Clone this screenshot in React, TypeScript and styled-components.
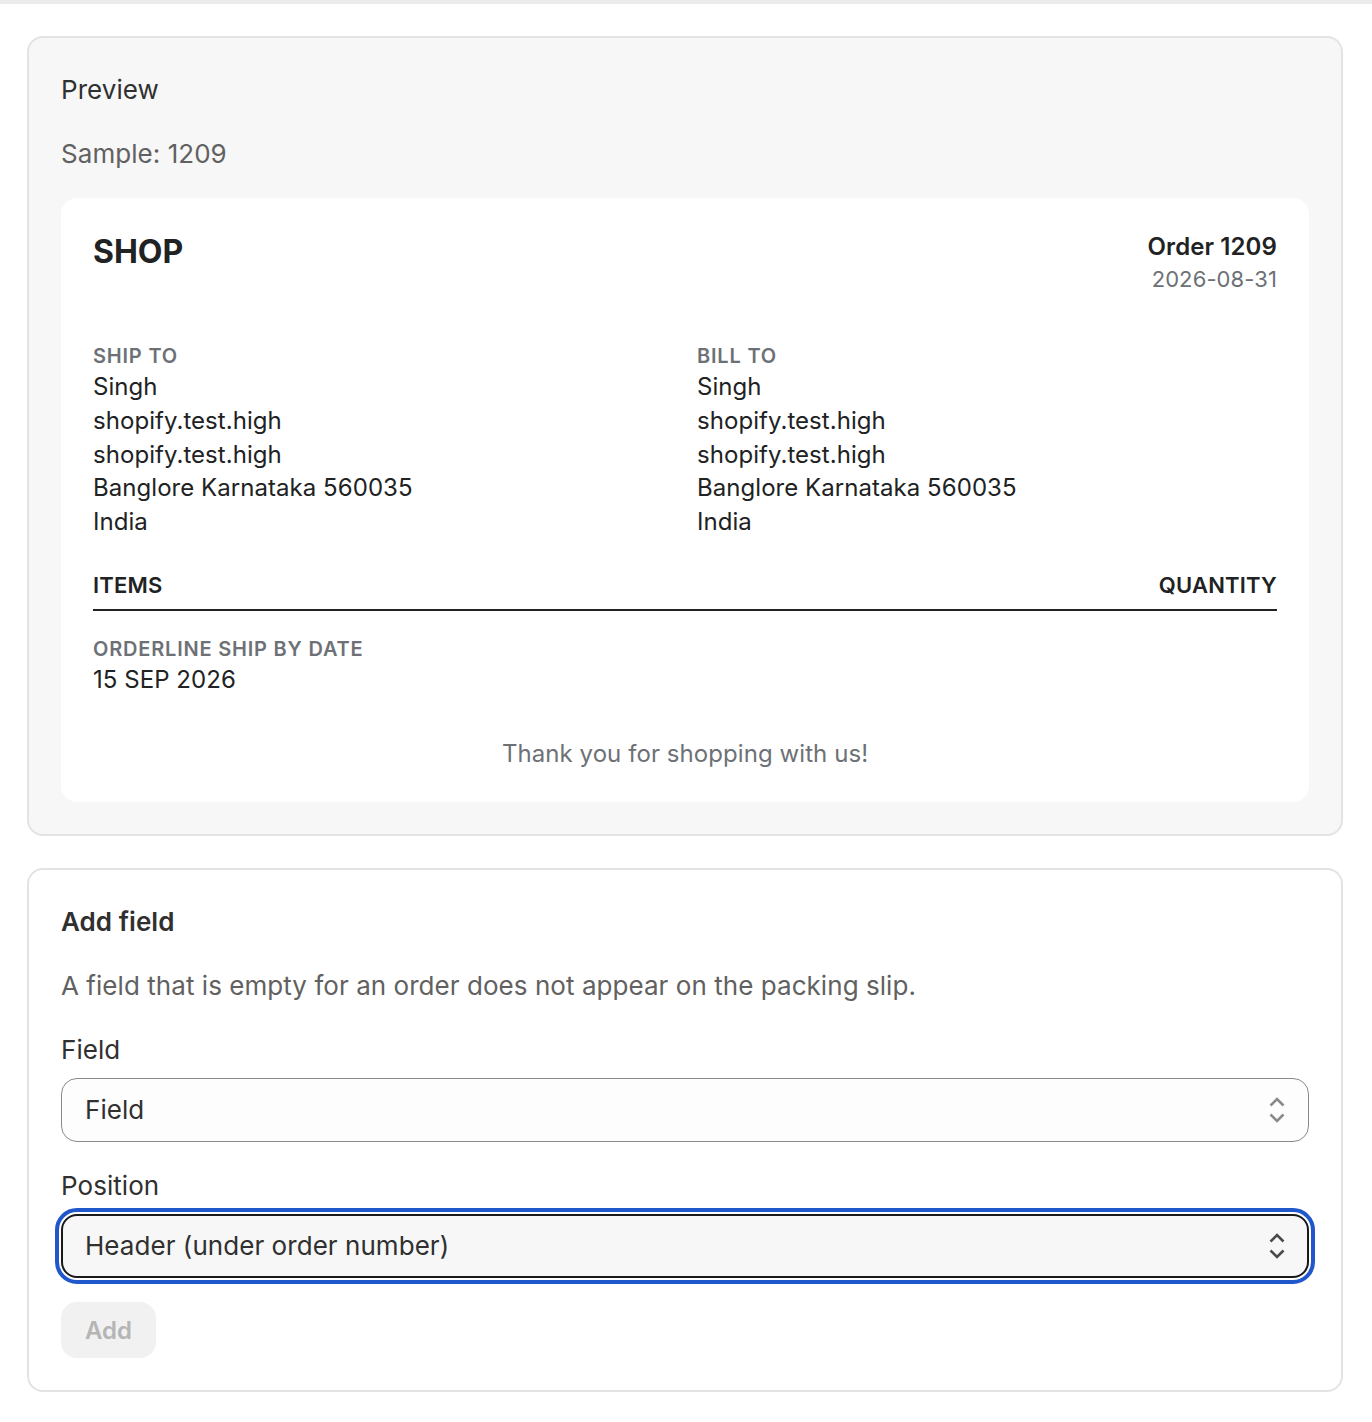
import React from 'react'
import styled, { createGlobalStyle } from 'styled-components'

const GlobalStyle = createGlobalStyle`
    html, body {
        margin: 0;
        padding: 0;
        background: #ffffff;
    }
    body {
        font-family: Inter, "Liberation Sans", sans-serif;
        color: #303030;
        -webkit-font-smoothing: antialiased;
    }
`;

const Page = styled.div`
    width: 1372px;
    height: 1422px;
    box-sizing: border-box;
    border-top: 4px solid #ebebeb;
    padding: 32px 29px 0 27px;
    display: flex;
    flex-direction: column;
    gap: 32px;
`;

const Card = styled.section<{ $muted?: boolean }>`
    box-sizing: border-box;
    border: 2px solid #e3e3e3;
    border-radius: 16px;
    padding: 32px;
    background: ${p => (p.$muted ? '#f7f7f7' : '#ffffff')};
`;

const CardTitle = styled.h2<{ $strong?: boolean }>`
    margin: 0;
    font-size: 26px;
    line-height: 40px;
    letter-spacing: 0.05px;
    font-weight: ${p => (p.$strong ? 600 : 400)};
    color: #303030;
`;

const Subdued = styled.p`
    margin: 24px 0 0;
    font-size: 26px;
    line-height: 40px;
    letter-spacing: 0.05px;
    color: #616161;
`;

const Slip = styled.div`
    margin-top: 24px;
    background: #ffffff;
    border-radius: 16px;
    padding: 32px 32px 31px;
    color: #202223;
`;

const SlipHeader = styled.header`
    display: flex;
    justify-content: space-between;
    align-items: flex-start;
`;

const ShopName = styled.div`
    font-size: 32px;
    line-height: 44px;
    font-weight: 700;
`;

const OrderMeta = styled.div`
    text-align: right;
`;

const OrderNumber = styled.div`
    font-size: 24px;
    line-height: 34px;
    letter-spacing: 0.1px;
    font-weight: 600;
`;

const OrderDate = styled.div`
    font-size: 22px;
    line-height: 30px;
    letter-spacing: 0.1px;
    color: #6d7175;
`;

const Addresses = styled.div`
    margin-top: 48px;
    display: grid;
    grid-template-columns: 1fr 1fr;
    column-gap: 24px;
`;

const SmallHeading = styled.div`
    font-size: 20px;
    line-height: 28.3px;
    font-weight: 600;
    letter-spacing: 0.8px;
    color: #6d7175;
`;

const Line = styled.div`
    font-size: 24px;
    line-height: 33.7px;
    letter-spacing: 0.05px;
    color: #202223;
`;

const ItemsHeader = styled.div`
    margin-top: 28.7px;
    padding-bottom: 7px;
    display: flex;
    justify-content: space-between;
    border-bottom: 2px solid #202223;
    font-size: 22px;
    line-height: 34px;
    font-weight: 600;
    letter-spacing: 0.2px;
`;

const ShipBy = styled.div`
    margin-top: 24px;
`;

const ThankYou = styled.div`
    margin-top: 40.5px;
    text-align: center;
    font-size: 24px;
    line-height: 34px;
    letter-spacing: 0.07px;
    color: #6d7175;
`;

const Label = styled.div`
    margin-top: 24px;
    font-size: 26px;
    line-height: 40px;
    letter-spacing: 0.05px;
    color: #303030;
`;

const Select = styled.div<{ $focused?: boolean }>`
    box-sizing: border-box;
    margin-top: 8px;
    height: 64px;
    padding: 0 ${p => (p.$focused ? '22px' : '23px')};
    display: flex;
    align-items: center;
    justify-content: space-between;
    font-size: 26px;
    letter-spacing: 0.05px;
    color: #303030;
    border-radius: 16px;
    border: ${p => (p.$focused ? '2px solid #1a1a1a' : '1.5px solid #8a8a8a')};
    background: ${p => (p.$focused ? '#f7f7f7' : '#fdfdfd')};
    ${p => p.$focused && `
        outline: 4px solid #2058cb;
        outline-offset: 2px;
    `}
`;

const SelectValue = styled.span`
    margin-bottom: 2px;
`;

const AddButton = styled.button`
    margin-top: 24px;
    display: block;
    width: 95px;
    height: 56px;
    padding: 0;
    border: 0;
    border-radius: 16px;
    background: #f1f1f1;
    color: #b5b5b5;
    font-family: inherit;
    font-size: 24px;
    font-weight: 600;
`;

const Chevrons = ({ color }: { color: string }) => (
    <svg width="16" height="26" viewBox="0 0 16 26" fill="none" stroke={color} strokeWidth="2.6">
        <path d="M1.5 8.5 8 2l6.500 6.500" />
        <path d="M1.5 17.500 8 24l6.500-6.500" />
    </svg>
)

const address = ['Singh', 'shopify.test.high', 'shopify.test.high', 'Banglore Karnataka 560035', 'India']

const Address = ({ title }: { title: string }) => (
    <div>
        <SmallHeading>{title}</SmallHeading>
        {address.map((l, i) => <Line key={i}>{l}</Line>)}
    </div>
)

const App = () => (
    <>
        <GlobalStyle />
        <Page>
            <Card $muted>
                <CardTitle>Preview</CardTitle>
                <Subdued>Sample: 1209</Subdued>
                <Slip>
                    <SlipHeader>
                        <ShopName>SHOP</ShopName>
                        <OrderMeta>
                            <OrderNumber>Order 1209</OrderNumber>
                            <OrderDate>2026-08-31</OrderDate>
                        </OrderMeta>
                    </SlipHeader>
                    <Addresses>
                        <Address title="SHIP TO" />
                        <Address title="BILL TO" />
                    </Addresses>
                    <ItemsHeader>
                        <span>ITEMS</span>
                        <span>QUANTITY</span>
                    </ItemsHeader>
                    <ShipBy>
                        <SmallHeading>ORDERLINE SHIP BY DATE</SmallHeading>
                        <Line>15 SEP 2026</Line>
                    </ShipBy>
                    <ThankYou>Thank you for shopping with us!</ThankYou>
                </Slip>
            </Card>
            <Card>
                <CardTitle $strong>Add field</CardTitle>
                <Subdued>A field that is empty for an order does not appear on the packing slip.</Subdued>
                <Label>Field</Label>
                <Select>
                    <SelectValue>Field</SelectValue>
                    <Chevrons color="#8a8a8a" />
                </Select>
                <Label>Position</Label>
                <Select $focused>
                    <SelectValue>Header (under order number)</SelectValue>
                    <Chevrons color="#4a4a4a" />
                </Select>
                <AddButton disabled>Add</AddButton>
            </Card>
        </Page>
    </>
)

export default App
